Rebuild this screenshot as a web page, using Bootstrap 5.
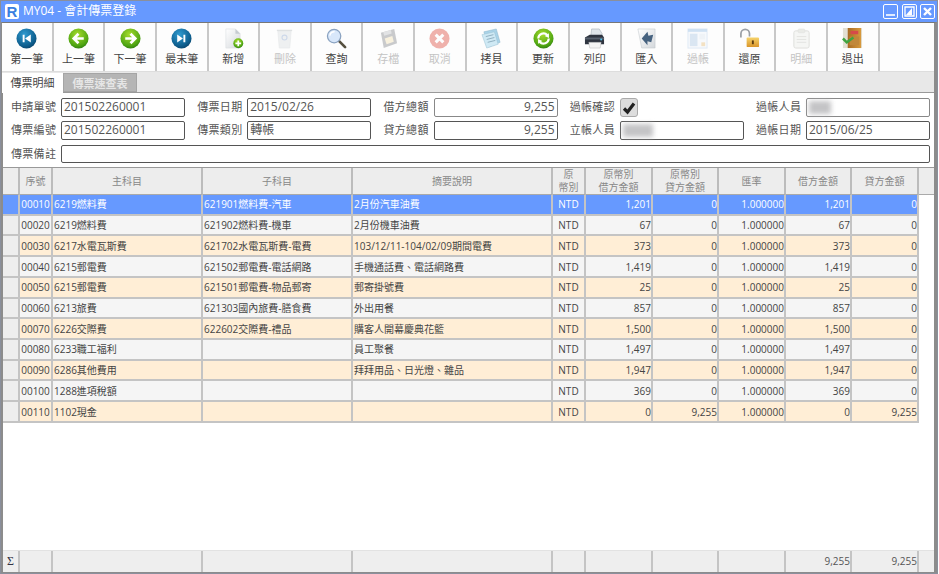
<!DOCTYPE html>
<html lang="zh-Hant">
<head>
<meta charset="utf-8">
<title>MY04 - 會計傳票登錄</title>
<link rel="stylesheet" href="https://cdn.jsdelivr.net/npm/bootstrap@5.3.0/dist/css/bootstrap.min.css">
<style>
html,body{height:574px;overflow:hidden;background:#fff}
body{font-family:"Open Sans","Noto Sans CJK TC",sans-serif;font-size:11px;color:#444;line-height:1.2}
.svgdefs{position:absolute;width:0;height:0}
.appwin{height:574px;width:938px;border:1px solid #8a8f9c}
.titlebar{height:21px;background:#6699ff;color:#fff;font-size:12px;padding-left:4px;flex:none}
.logo-r{width:14px;height:15px;background:#fff;border-radius:2px;color:#3a7fe0;font:bold 15px/15px "Liberation Sans",sans-serif;text-align:center;margin-right:4px}
.winbtn{width:15px;height:15px;border:1px solid #fff;border-radius:2px;margin-left:3.5px;padding:0;background:transparent}
.winbtn svg{display:block;width:13px;height:13px}
.winbtns{margin-right:2px}
.winbody{flex:1;min-height:0;border:solid #8c8c8c;border-width:1px 3px 2px 2px;border-top-color:#777}
.tb{height:49px;flex:none;background:#fdfdfd;border-bottom:1px solid #ddd;margin-left:-1px}
.tbbtn{width:51.63px;height:48px;border:0;border-right:2px solid #c8c8c8;border-radius:0;padding:5px 0 0;background:transparent;font-size:11px;color:#444;display:flex;flex-direction:column;align-items:center;line-height:14px}
.tbbtn svg{width:21px;height:21px;display:block;margin-bottom:3px}
.tbbtn.disabled{opacity:1;color:#c4c4c4;border-right:2px solid #c8c8c8}
.tbbtn.disabled svg{opacity:.36}
.tabstrip{height:21px;flex:none;background:#e8e8e8;border-bottom:1px solid #999;padding:1px 0 0;margin:0 0 0 -1px;flex-wrap:nowrap}
.tabstrip .nav-link{border:0;border-radius:0;font-size:11px;padding:2px 0 0;text-align:center;margin:0;line-height:15px}
.tabstrip .nav-link.active{width:61px;background:#fff;color:#444;height:20px}
.tabstrip .nav-link.idle{width:74px;background:#b5b5b5;color:#e6e6e6;height:19px;border:1px solid #a5a5a5;font-weight:600}
.formpane{height:75px;flex:none;padding:5px 0 0 8px;background:#fff;border-bottom:1px solid #999}
.frow{height:18.7px;margin-bottom:4.6px}
.fcell{width:186.25px;flex:none}
.flabel{width:50px;flex:none;font-size:11px;letter-spacing:.3px;color:#555;line-height:18px;white-space:nowrap}
.fbox{width:124px;height:18.7px;flex:none;border:1px solid #555;border-radius:2px;padding:0 2px;font-size:12px;line-height:16px;color:#555;background:#fff;min-height:0;white-space:nowrap}
.fbox.grey{border-color:#888}
.fbox.num{text-align:right}
.fbox.full{width:869px}
.fcheck{width:18px;height:19px;background:#ddd;border:1px solid #aaa;border-radius:3px;display:flex;align-items:center;justify-content:center}
.fcheck svg{width:14px;height:14px}
.smear{display:block;height:13px;margin-top:1.5px;background:#c4c4c6;filter:blur(2.5px)}
.smear.narrow{width:22px}
.smear.wide{width:30px}
.gridwrap{flex:1;min-height:0;background:#fff}
.dtable{table-layout:fixed;border-collapse:separate;border-spacing:0;margin:0;width:931px;font-size:10px;color:#444;--bs-table-bg:transparent;--bs-table-color:#444}
.dtable>:not(caption)>*>*{padding:0 1px;border:0;border-right:2px solid #c4c4c4;border-bottom:2px solid #c4c4c4;white-space:nowrap;overflow:hidden;line-height:14px;vertical-align:middle;box-shadow:none}
.dtable thead th{height:26px;background:#ededed;color:#888;font-weight:400;text-align:center;line-height:13px;border-bottom:1px solid #aaa;border-right-color:#bcbcbc;padding:0;overflow:visible}
.dtable thead th.fill{border-right:0}
.dtable tbody tr{height:20.73px}
.dtable tbody td.rh{background:#eee}
.dtable .zodd>td{background:#f5f5f5}
.dtable .zeven>td{background:#ffeed6}
.dtable tr.picked>td{background:#6699ff;color:#fff;border-bottom-color:#c4c4c4}
.dtable tr.picked>td.rh{background:#6699ff}
.dtable tbody td.fill{background:#fff!important;border:0}
.dtable>:not(caption)>*>td.rgt{text-align:right;padding-right:0}
.ctr{text-align:center}
.sumbar{flex:none;height:21px;background:#eee;border-top:1px solid #e2e2e2}
.sumbar .dtable>*>*>*{border-bottom:0;height:20px;background:#eee;color:#555;font-size:10px}
.sumbar .dtable td.sigma{color:#334;font-size:12px;font-family:"Liberation Serif",serif}
.sumbar .dtable td.fill{border:0;background:#eee!important}
</style>
</head>
<body>
<svg class="svgdefs" aria-hidden="true">
<defs>
<radialGradient id="gb" cx=".4" cy=".3" r=".8"><stop offset="0" stop-color="#2f9bd0"/><stop offset=".7" stop-color="#0e5f8f"/><stop offset="1" stop-color="#083c61"/></radialGradient>
<radialGradient id="gg" cx=".45" cy=".3" r=".8"><stop offset="0" stop-color="#a6dc2c"/><stop offset=".7" stop-color="#4fa512"/><stop offset="1" stop-color="#1f6a10"/></radialGradient>
<linearGradient id="gp" x1="0" y1="0" x2="1" y2="1"><stop offset="0" stop-color="#fff"/><stop offset="1" stop-color="#d4d8dc"/></linearGradient>
<linearGradient id="gd" x1="0" y1="0" x2="1" y2="0"><stop offset="0" stop-color="#a86a24"/><stop offset="1" stop-color="#d89a3e"/></linearGradient>
<linearGradient id="gl" x1="0" y1="0" x2="0" y2="1"><stop offset="0" stop-color="#f6d36a"/><stop offset="1" stop-color="#d9952a"/></linearGradient>
</defs>
</svg>
<div class="appwin d-flex flex-column">
  <div class="titlebar d-flex align-items-center">
    <span class="logo-r">R</span><span>MY04 - 會計傳票登錄</span>
    <div class="winbtns d-flex ms-auto">
      <button class="winbtn" type="button" aria-label="最小化"><svg viewBox="0 0 13 13"><path d="M2 10h9" stroke="#fff" stroke-width="1.6"/></svg></button>
      <button class="winbtn" type="button" aria-label="還原"><svg viewBox="0 0 13 13"><path d="M2 2h9v9H2z" fill="none" stroke="#fff" stroke-width="1.3"/><path d="M3 10l6-7v7z" fill="#fff"/></svg></button>
      <button class="winbtn" type="button" aria-label="關閉"><svg viewBox="0 0 13 13"><path d="M3 3l7 7M10 3l-7 7" stroke="#fff" stroke-width="2.4"/></svg></button>
    </div>
  </div>
  <div class="winbody d-flex flex-column">
    <div class="tb btn-toolbar flex-nowrap" role="toolbar">
      <button class="btn tbbtn" type="button"><svg viewBox="0 0 22 22"><circle cx="11" cy="11" r="10.5" fill="url(#gb)"/><path d="M7 7h2v8H7zM15.5 6.8v8.4L9.5 11z" fill="#fff"/></svg>第一筆</button>
      <button class="btn tbbtn" type="button"><svg viewBox="0 0 22 22"><circle cx="11" cy="11" r="10.5" fill="url(#gg)"/><path d="M16.5 11H7M11 6l-5 5 5 5" fill="none" stroke="#fff" stroke-width="2.8"/></svg>上一筆</button>
      <button class="btn tbbtn" type="button"><svg viewBox="0 0 22 22"><circle cx="11" cy="11" r="10.5" fill="url(#gg)"/><path d="M5.5 11H15M11 6l5 5-5 5" fill="none" stroke="#fff" stroke-width="2.8"/></svg>下一筆</button>
      <button class="btn tbbtn" type="button"><svg viewBox="0 0 22 22"><circle cx="11" cy="11" r="10.5" fill="url(#gb)"/><path d="M13 7h2v8h-2zM6.500 6.800v8.400L12.500 11z" fill="#fff"/></svg>最末筆</button>
      <button class="btn tbbtn" type="button"><svg viewBox="0 0 22 22"><path d="M3 1h10l5 5v15H3z" fill="url(#gp)" stroke="#d8dcdf" stroke-width=".6"/><path d="M13 1v5h5z" fill="#c6ccd1"/><circle cx="16" cy="16" r="5.200" fill="url(#gg)"/><path d="M16 13v6M13 16h6" stroke="#fff" stroke-width="1.800"/></svg>新增</button>
      <button class="btn tbbtn disabled" type="button"><svg viewBox="0 0 22 22"><path d="M4 3h14l-1.500 18h-11z" fill="#d6dadd" stroke="#b9bfc3" stroke-width=".6"/><path d="M3 2.500h16" stroke="#aab0b5" stroke-width="1.400"/><circle cx="11" cy="10" r="2.600" fill="none" stroke="#7d9cc9" stroke-width="1.200"/></svg>刪除</button>
      <button class="btn tbbtn" type="button"><svg viewBox="0 0 22 22"><path d="M13 13l7 7" stroke="#55503f" stroke-width="2.800" stroke-linecap="round"/><circle cx="8.500" cy="8.500" r="7" fill="#d8e7fa" stroke="#8aa2c0" stroke-width="1.300"/><path d="M4 8a5 5 0 0 1 5-4" fill="none" stroke="#fff" stroke-width="1.500"/></svg>查詢</button>
      <button class="btn tbbtn disabled" type="button"><svg viewBox="0 0 22 22"><path d="M3 5l14-4 3 15-14 5z" fill="#6f7378"/><path d="M7 11l8-2.500 1.500 6L9 17z" fill="#f1ddaa"/><path d="M5.500 4.500l8-2.300.8 3.500-7.800 2.300z" fill="#b5b8bb"/></svg>存檔</button>
      <button class="btn tbbtn disabled" type="button"><svg viewBox="0 0 22 22"><circle cx="11" cy="11" r="10.500" fill="#d92c1c"/><path d="M7 7l8 8M15 7l-8 8" stroke="#fff" stroke-width="3.200"/></svg>取消</button>
      <button class="btn tbbtn" type="button"><svg viewBox="0 0 22 22"><path d="M3 4l13-3 4 14-12 5z" fill="#a9d3e8" stroke="#88b3c9" stroke-width=".5"/><path d="M1 7l13-3 4 13-12 4z" fill="#cfe9f4" stroke="#96bdd1" stroke-width=".5"/><path d="M5 9l8-2M6 12l8-2M7 15l8-2" stroke="#7d9fb2" stroke-width=".8"/></svg>拷貝</button>
      <button class="btn tbbtn" type="button"><svg viewBox="0 0 22 22"><circle cx="11" cy="11" r="10.500" fill="url(#gg)"/><path d="M5.500 11a5.500 5.500 0 0 1 9.500-3.600" fill="none" stroke="#fff" stroke-width="2.200"/><path d="M16.800 10.500l-.2-5-4.400 3z" fill="#fff"/><path d="M16.500 11a5.500 5.500 0 0 1-9.500 3.600" fill="none" stroke="#fff" stroke-width="2.200"/><path d="M5.200 11.500l.2 5 4.400-3z" fill="#fff"/></svg>更新</button>
      <button class="btn tbbtn" type="button"><svg viewBox="0 0 22 22"><path d="M8 1h8l3 5-1 4H7z" fill="#dfe5ea" stroke="#98a2ab" stroke-width=".5"/><path d="M1 10l5-3h13l2 3v7H1z" fill="#2f3540"/><path d="M1 10h20v2H1z" fill="#59626f"/><path d="M5 15h13l-1 6H6z" fill="#f4f4f4" stroke="#a4a4a4" stroke-width=".4"/><circle cx="18" cy="12" r="1" fill="#4cc3f1"/></svg>列印</button>
      <button class="btn tbbtn" type="button"><svg viewBox="0 0 22 22"><path d="M2 1h18v20H6z" fill="url(#gp)" stroke="#bcc2c7" stroke-width=".5"/><path d="M6 11l6-7 1 4 5-1-2 8-4-1v4z" fill="#46627f"/></svg>匯入</button>
      <button class="btn tbbtn disabled" type="button"><svg viewBox="0 0 22 22"><rect x="1" y="1" width="20" height="20" fill="#eef4fb" stroke="#a9c6e6"/><rect x="1" y="1" width="20" height="3" fill="#7fb0e0"/><rect x="3" y="6" width="8" height="13" fill="#9ebfe0"/><rect x="13" y="6" width="6" height="6" fill="#d9e4ef"/><path d="M15 19v-4h4v4z" fill="#e2b060"/></svg>過帳</button>
      <button class="btn tbbtn" type="button"><svg viewBox="0 0 22 22"><path d="M2 10V6a4.500 4.500 0 0 1 9 0v3" fill="none" stroke="#9a9fa5" stroke-width="1.800"/><rect x="8" y="10" width="13" height="10" rx="1" fill="url(#gl)"/><path d="M14.500 13v4" stroke="#5c3c10" stroke-width="2"/></svg>還原</button>
      <button class="btn tbbtn disabled" type="button"><svg viewBox="0 0 22 22"><rect x="3" y="3" width="16" height="18" rx="2" fill="#e9ebe6" stroke="#a7aaa0"/><rect x="7.500" y="1" width="7" height="4" rx="1" fill="#c9ccc3" stroke="#a7aaa0" stroke-width=".5"/><path d="M6 9h10M6 12h10M6 15h10" stroke="#b4b7ae"/></svg>明細</button>
      <button class="btn tbbtn" type="button"><svg viewBox="0 0 22 22"><rect x="1" y="0" width="20" height="21" fill="#e2dfd3"/><path d="M6 0h14v21H6z" fill="url(#gd)"/><rect x="9" y="3" width="8" height="3.500" fill="#d64a4a"/><rect x="8" y="9" width="10" height="9" fill="#c1873a"/><path d="M1 11l4 4 7-5" fill="none" stroke="#3fa43f" stroke-width="2.600"/></svg>退出</button>
    </div>
    <ul class="nav nav-tabs tabstrip">
      <li class="nav-item"><a class="nav-link active" href="#">傳票明細</a></li>
      <li class="nav-item"><a class="nav-link idle" href="#">傳票速查表</a></li>
    </ul>
    <div class="formpane">
      <div class="frow d-flex">
        <div class="fcell d-flex"><span class="flabel">申請單號</span><div class="fbox form-control">201502260001</div></div>
        <div class="fcell d-flex"><span class="flabel">傳票日期</span><div class="fbox form-control">2015/02/26</div></div>
        <div class="fcell d-flex"><span class="flabel">借方總額</span><div class="fbox form-control grey num">9,255</div></div>
        <div class="fcell d-flex"><span class="flabel">過帳確認</span><span class="fcheck"><svg viewBox="0 0 14 14"><path d="M2 7.500l3.500 3.500L12 2.500" fill="none" stroke="#222" stroke-width="3.200"/></svg></span></div>
        <div class="fcell d-flex"><span class="flabel">過帳人員</span><div class="fbox form-control grey"><span class="smear narrow"></span></div></div>
      </div>
      <div class="frow d-flex">
        <div class="fcell d-flex"><span class="flabel">傳票編號</span><div class="fbox form-control">201502260001</div></div>
        <div class="fcell d-flex"><span class="flabel">傳票類別</span><div class="fbox form-control">轉帳</div></div>
        <div class="fcell d-flex"><span class="flabel">貸方總額</span><div class="fbox form-control num">9,255</div></div>
        <div class="fcell d-flex"><span class="flabel">立帳人員</span><div class="fbox form-control"><span class="smear wide"></span></div></div>
        <div class="fcell d-flex"><span class="flabel">過帳日期</span><div class="fbox form-control">2015/06/25</div></div>
      </div>
      <div class="frow d-flex">
        <span class="flabel">傳票備註</span><div class="fbox full form-control"></div>
      </div>
    </div>
    <div class="gridwrap">
      <table class="table dtable">
        <colgroup><col style="width:17px"><col style="width:33px"><col style="width:150px"><col style="width:150px"><col style="width:200px"><col style="width:33px"><col style="width:67px"><col style="width:66px"><col style="width:67px"><col style="width:66px"><col style="width:67px"><col style="width:15px"></colgroup>
        <thead><tr><th></th><th>序號</th><th>主科目</th><th>子科目</th><th>摘要說明</th><th>原<br>幣別</th><th>原幣別<br>借方金額</th><th>原幣別<br>貸方金額</th><th>匯率</th><th>借方金額</th><th>貸方金額</th><th class="fill"></th></tr></thead>
        <tbody>
          <tr class="picked"><td class="rh"></td><td class="ctr">00010</td><td>6219燃料費</td><td>621901燃料費-汽車</td><td>2月份汽車油費</td><td class="ctr">NTD</td><td class="rgt">1,201</td><td class="rgt">0</td><td class="rgt">1.000000</td><td class="rgt">1,201</td><td class="rgt">0</td><td class="fill"></td></tr>
          <tr class="zodd"><td class="rh"></td><td class="ctr">00020</td><td>6219燃料費</td><td>621902燃料費-機車</td><td>2月份機車油費</td><td class="ctr">NTD</td><td class="rgt">67</td><td class="rgt">0</td><td class="rgt">1.000000</td><td class="rgt">67</td><td class="rgt">0</td><td class="fill"></td></tr>
          <tr class="zeven"><td class="rh"></td><td class="ctr">00030</td><td>6217水電瓦斯費</td><td>621702水電瓦斯費-電費</td><td>103/12/11-104/02/09期間電費</td><td class="ctr">NTD</td><td class="rgt">373</td><td class="rgt">0</td><td class="rgt">1.000000</td><td class="rgt">373</td><td class="rgt">0</td><td class="fill"></td></tr>
          <tr class="zodd"><td class="rh"></td><td class="ctr">00040</td><td>6215郵電費</td><td>621502郵電費-電話網路</td><td>手機通話費、電話網路費</td><td class="ctr">NTD</td><td class="rgt">1,419</td><td class="rgt">0</td><td class="rgt">1.000000</td><td class="rgt">1,419</td><td class="rgt">0</td><td class="fill"></td></tr>
          <tr class="zeven"><td class="rh"></td><td class="ctr">00050</td><td>6215郵電費</td><td>621501郵電費-物品郵寄</td><td>郵寄掛號費</td><td class="ctr">NTD</td><td class="rgt">25</td><td class="rgt">0</td><td class="rgt">1.000000</td><td class="rgt">25</td><td class="rgt">0</td><td class="fill"></td></tr>
          <tr class="zodd"><td class="rh"></td><td class="ctr">00060</td><td>6213旅費</td><td>621303國內旅費-膳食費</td><td>外出用餐</td><td class="ctr">NTD</td><td class="rgt">857</td><td class="rgt">0</td><td class="rgt">1.000000</td><td class="rgt">857</td><td class="rgt">0</td><td class="fill"></td></tr>
          <tr class="zeven"><td class="rh"></td><td class="ctr">00070</td><td>6226交際費</td><td>622602交際費-禮品</td><td>購客人開幕慶典花籃</td><td class="ctr">NTD</td><td class="rgt">1,500</td><td class="rgt">0</td><td class="rgt">1.000000</td><td class="rgt">1,500</td><td class="rgt">0</td><td class="fill"></td></tr>
          <tr class="zodd"><td class="rh"></td><td class="ctr">00080</td><td>6233職工福利</td><td></td><td>員工聚餐</td><td class="ctr">NTD</td><td class="rgt">1,497</td><td class="rgt">0</td><td class="rgt">1.000000</td><td class="rgt">1,497</td><td class="rgt">0</td><td class="fill"></td></tr>
          <tr class="zeven"><td class="rh"></td><td class="ctr">00090</td><td>6286其他費用</td><td></td><td>拜拜用品、日光燈、雜品</td><td class="ctr">NTD</td><td class="rgt">1,947</td><td class="rgt">0</td><td class="rgt">1.000000</td><td class="rgt">1,947</td><td class="rgt">0</td><td class="fill"></td></tr>
          <tr class="zodd"><td class="rh"></td><td class="ctr">00100</td><td>1288進項稅額</td><td></td><td></td><td class="ctr">NTD</td><td class="rgt">369</td><td class="rgt">0</td><td class="rgt">1.000000</td><td class="rgt">369</td><td class="rgt">0</td><td class="fill"></td></tr>
          <tr class="zeven"><td class="rh"></td><td class="ctr">00110</td><td>1102現金</td><td></td><td></td><td class="ctr">NTD</td><td class="rgt">0</td><td class="rgt">9,255</td><td class="rgt">1.000000</td><td class="rgt">0</td><td class="rgt">9,255</td><td class="fill"></td></tr>
        </tbody>
      </table>
    </div>
    <div class="sumbar">
      <table class="table dtable">
        <colgroup><col style="width:17px"><col style="width:33px"><col style="width:150px"><col style="width:150px"><col style="width:200px"><col style="width:33px"><col style="width:67px"><col style="width:66px"><col style="width:67px"><col style="width:66px"><col style="width:67px"><col style="width:15px"></colgroup>
        <tbody><tr><td class="ctr sigma">Σ</td><td></td><td></td><td></td><td></td><td></td><td></td><td></td><td></td><td class="rgt">9,255</td><td class="rgt">9,255</td><td class="fill"></td></tr></tbody>
      </table>
    </div>
  </div>
</div>
<script src="https://cdn.jsdelivr.net/npm/bootstrap@5.3.0/dist/js/bootstrap.bundle.min.js"></script>
</body>
</html>
